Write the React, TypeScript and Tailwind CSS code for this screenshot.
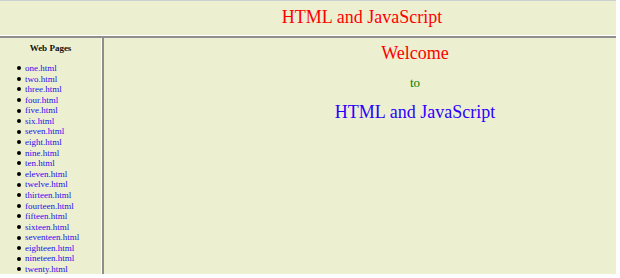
const PAGES = [
  'one', 'two', 'three', 'four', 'five', 'six', 'seven', 'eight', 'nine', 'ten',
  'eleven', 'twelve', 'thirteen', 'fourteen', 'fifteen', 'sixteen', 'seventeen',
  'eighteen', 'nineteen', 'twenty',
];

export default function App() {
  return (
    <div className="h-[278px] w-[620px] bg-white font-['Liberation_Serif',serif]">
      <div className="flex h-[274px] w-[616px] flex-col border-t border-[#c9d2d0] bg-[#edf0d0]">
        {/* top frame */}
        <div className="flex h-[34px] items-center justify-center pb-[2px] pl-[108px]">
          <h1 className="text-[18px] leading-none text-[#ff0000]">HTML and JavaScript</h1>
        </div>
        <div className="h-[3px] border-t border-white bg-[#8e8e8e]" />

        <div className="flex min-h-0 flex-1">
          {/* left frame */}
          <div className="w-[101px] overflow-hidden">
            <h5 className="mt-[5px] text-center text-[9px] font-bold leading-[11px] text-[#111]">Web Pages</h5>
            <ul className="mt-[9px] pl-[17px] text-[9px] leading-[10.58px]">
              {PAGES.map((p) => (
                <li key={p} className="flex items-center gap-[4px]">
                  <span className="h-[4px] w-[4px] shrink-0 rounded-full bg-black" />
                  <a href="#" className="text-[#2a0cee] no-underline">
                    {p}.html
                  </a>
                </li>
              ))}
            </ul>
          </div>
          <div className="w-[3px] border-l border-white bg-[#8e8e8e]" />

          {/* right frame */}
          <div className="flex flex-1 flex-col items-center pl-[110px]">
            <h2 className="mt-[4px] text-[18px] leading-[22px] text-[#ff0000]">Welcome</h2>
            <p className="mt-[11px] text-[13px] leading-[16px] text-[#008000]">to</p>
            <h2 className="mt-[10px] text-[18px] leading-[22px] text-[#2a00ff]">HTML and JavaScript</h2>
          </div>
        </div>
      </div>
    </div>
  );
}
